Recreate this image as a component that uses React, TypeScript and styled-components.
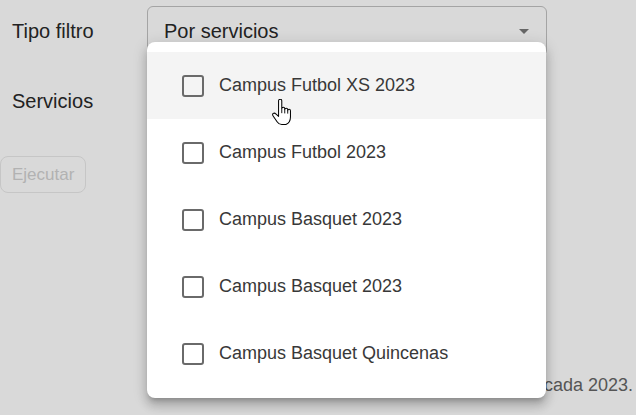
import * as React from 'react';
import styled, { createGlobalStyle } from 'styled-components';

const GlobalStyle = createGlobalStyle`
    html, body {
        margin: 0;
        padding: 0;
        background: #d9d9d9;
        font-family: "Liberation Sans", Arial, sans-serif;
    }
`;

const Page = styled.div`
    position: relative;
    width: 636px;
    height: 415px;
    display: flex;
    flex-direction: column;
    overflow: hidden;
`;

const Form = styled.div`
    display: flex;
    flex-direction: column;
    padding-top: 6px;
`;

const Row = styled.div<{ $gap?: number }>`
    display: flex;
    align-items: flex-start;
    margin-bottom: ${(p) => p.$gap ?? 20}px;
`;

const Label = styled.label`
    width: 135px;
    padding: 13px 0 0 12px;
    font-size: 20px;
    line-height: 24px;
    color: #222;
`;

const SelectBox = styled.div<{ $hidden?: boolean }>`
    box-sizing: border-box;
    width: 400px;
    height: 50px;
    display: flex;
    align-items: flex-start;
    justify-content: space-between;
    padding: 12px 17px 0 16px;
    border: 1px solid ${(p) => (p.$hidden ? 'transparent' : '#a4a4a4')};
    border-radius: 6px;
    font-size: 20px;
    line-height: 24px;
    color: #222;
`;

const Arrow = styled.span`
    margin-top: 10px;
    width: 0;
    height: 0;
    border-left: 5.5px solid transparent;
    border-right: 5.5px solid transparent;
    border-top: 5.5px solid #666;
`;

const Button = styled.button`
    align-self: flex-start;
    box-sizing: border-box;
    height: 37px;
    margin-top: 4px;
    padding: 0 11px;
    background: transparent;
    border: 1px solid #c6c6c6;
    border-radius: 8px;
    font-family: inherit;
    font-size: 17px;
    color: #b2b2b2;
`;

const Footer = styled.p`
    margin: auto 0 19px;
    padding-right: 3px;
    text-align: right;
    font-size: 18px;
    line-height: 22px;
    color: #555;
`;

const Menu = styled.ul`
    position: absolute;
    top: 42px;
    left: 147px;
    width: 399px;
    margin: 0;
    padding: 10px 0 11px;
    list-style: none;
    background: #fff;
    border-radius: 8px;
    box-shadow: 0 5px 5px -3px rgba(0, 0, 0, 0.2), 0 8px 10px 1px rgba(0, 0, 0, 0.14), 0 3px 14px 2px rgba(0, 0, 0, 0.12);
`;

const Item = styled.li<{ $hover?: boolean }>`
    height: 67px;
    display: flex;
    align-items: center;
    padding-left: 35px;
    background: ${(p) => (p.$hover ? '#f4f4f4' : 'transparent')};
    font-size: 18px;
    color: #383838;
`;

const Box = styled.span`
    box-sizing: border-box;
    width: 22px;
    height: 22px;
    margin-right: 15px;
    border: 2.6px solid #6a6a6a;
    border-radius: 3px;
`;

const Cursor = styled.svg`
    position: absolute;
    top: 99px;
    left: 271px;
`;

const servicios = [
    'Campus Futbol XS 2023',
    'Campus Futbol 2023',
    'Campus Basquet 2023',
    'Campus Basquet 2023',
    'Campus Basquet Quincenas',
];

const App = () => {
    return (
        <Page>
            <GlobalStyle />
            <Form>
                <Row>
                    <Label>Tipo filtro</Label>
                    <SelectBox>
                        <span>Por servicios</span>
                        <Arrow />
                    </SelectBox>
                </Row>
                <Row $gap={26}>
                    <Label>Servicios</Label>
                    <SelectBox $hidden />
                </Row>
                <Button disabled>Ejecutar</Button>
            </Form>
            <Footer>Informe de campus, versión publicada 2023.</Footer>
            <Menu>
                {servicios.map((s, i) => (
                    <Item key={i} $hover={i === 0}>
                        <Box />
                        {s}
                    </Item>
                ))}
            </Menu>
            <Cursor width="22" height="28" viewBox="0 0 19 24.5">
                <path
                    d="M6.5 1.6c0-.8.6-1.4 1.4-1.4s1.4.6 1.4 1.4V8.4c0-.7.6-1.2 1.3-1.2s1.3.5 1.3 1.2v.8c0-.7.6-1.2 1.3-1.2s1.3.5 1.3 1.2v1c0-.7.6-1.2 1.2-1.2s1.2.5 1.2 1.2v5.6c0 3-1.5 5.6-4 6.6H9.3c-2 0-3.1-1-4.1-2.5L1.6 14.6c-.6-.9-.3-1.8.5-2.1.7-.3 1.5 0 2 .6L6.5 15.2Z"
                    fill="#fff"
                    stroke="#000"
                    strokeWidth="0.9"
                    strokeLinejoin="round"
                />
                <path d="M9.3 8.4v4M11.9 9.2v3.4M14.5 10.2v2.6" stroke="#000" strokeWidth="0.8" />
            </Cursor>
        </Page>
    );
};

export default App;
